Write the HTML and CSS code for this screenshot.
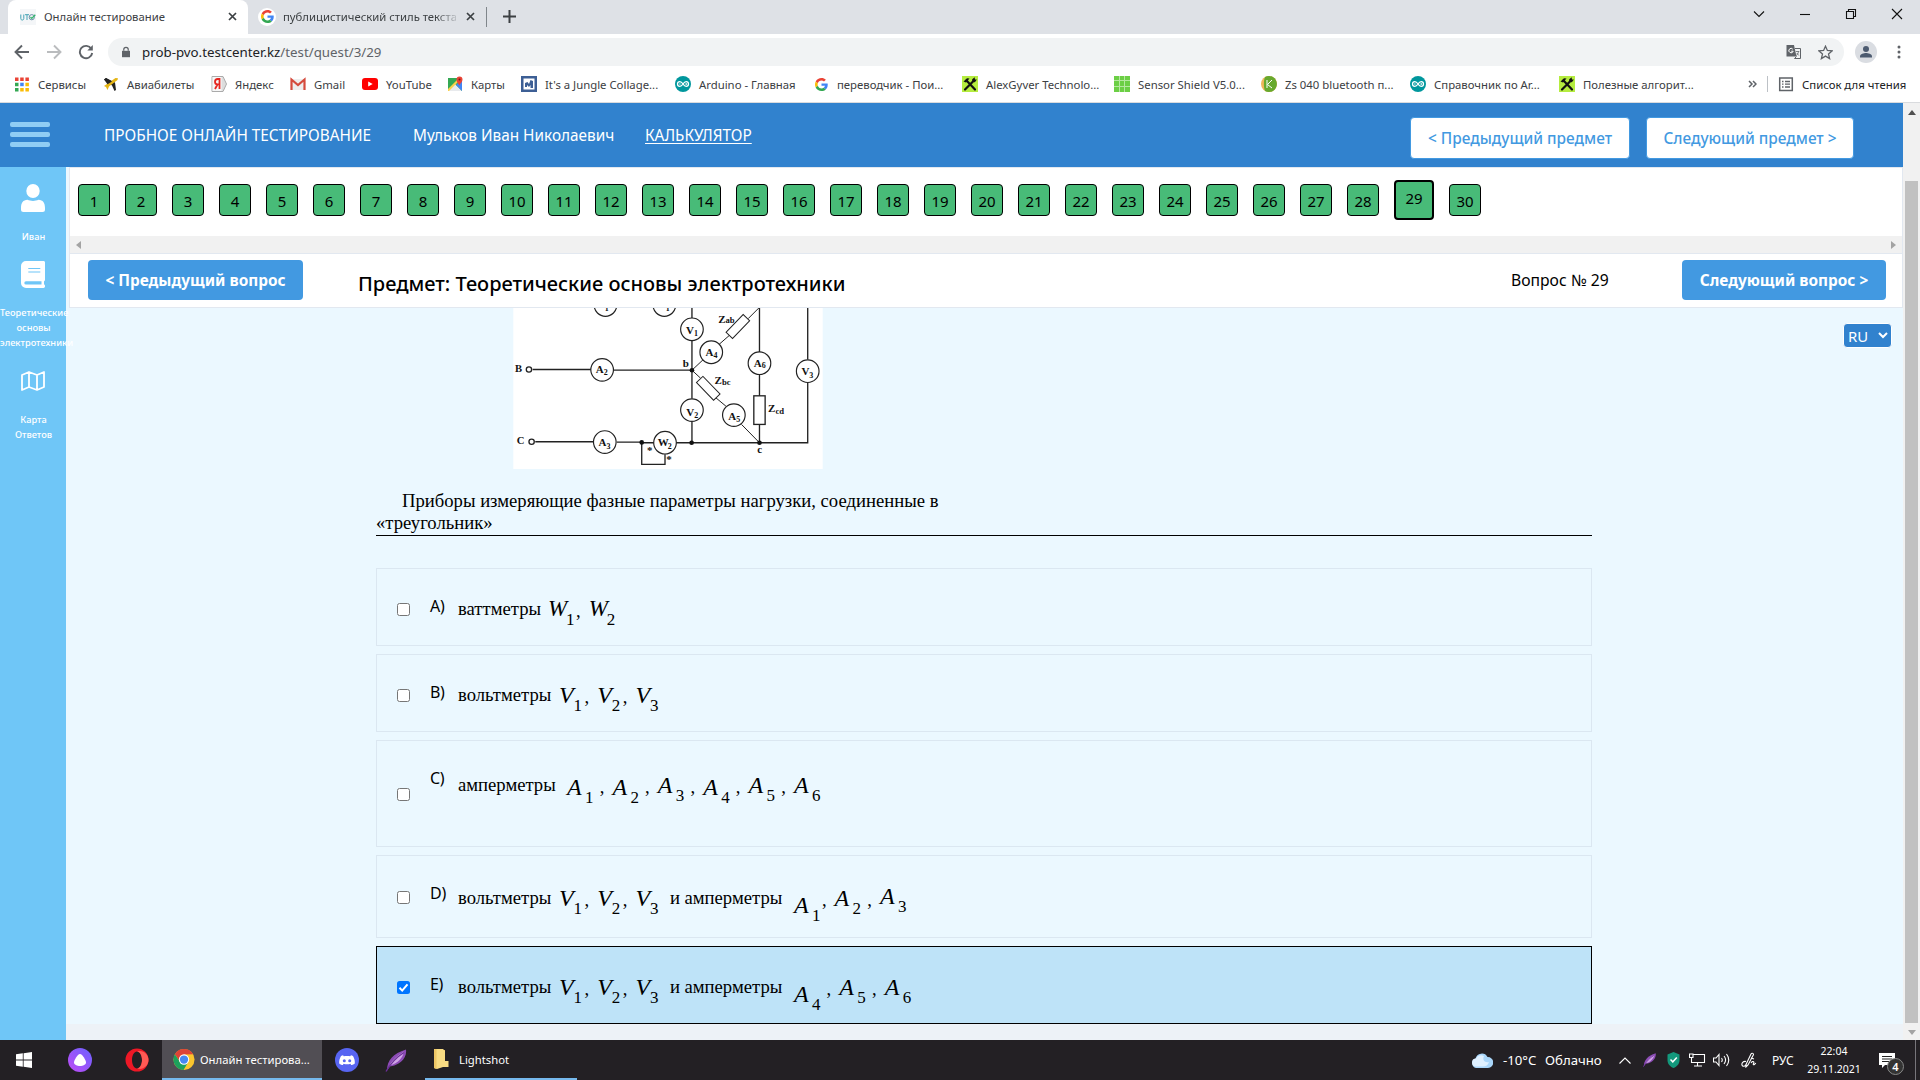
FILE: index.html
```html
<!DOCTYPE html>
<html lang="ru">
<head>
<meta charset="utf-8">
<title>Онлайн тестирование</title>
<link rel="stylesheet" href="styles.css">
</head>
<body>
<svg width="0" height="0" class="defs" aria-hidden="true">
  <defs>
    <symbol id="g" viewBox="0 0 48 48"><path fill="#ea4335" d="M24 9.5c3.5 0 6.700 1.200 9.200 3.600l6.900-6.900C35.900 2.400 30.500 0 24 0 14.600 0 6.500 5.400 2.600 13.200l8 6.200C12.400 13.700 17.700 9.500 24 9.500z"/><path fill="#4285f4" d="M47 24.600c0-1.600-.2-3.100-.4-4.600H24v9h12.900c-.6 3-2.300 5.500-4.800 7.200l7.700 6C44.400 38 47 31.800 47 24.600z"/><path fill="#fbbc05" d="M10.500 28.600c-.5-1.500-.8-3-.8-4.600s.3-3.100.8-4.600l-8-6.200C.9 16.500 0 20.100 0 24s.9 7.500 2.600 10.800z"/><path fill="#34a853" d="M24 48c6.500 0 11.900-2.100 15.900-5.800l-7.700-6c-2.200 1.400-4.900 2.300-8.200 2.300-6.300 0-11.600-4.200-13.500-9.900l-8 6.200C6.500 42.600 14.600 48 24 48z"/></symbol>
    <symbol id="arduino" viewBox="0 0 16 16"><circle cx="8" cy="8" r="8" fill="#00979d"/><path d="M8 8C6.800 6.200 5.900 5.700 4.800 5.700a2.300 2.300 0 0 0 0 4.600C5.900 10.300 6.800 9.800 8 8s2.100-2.300 3.200-2.300a2.300 2.300 0 0 1 0 4.600C10.100 10.300 9.200 9.800 8 8z" fill="none" stroke="#fff" stroke-width="1.300"/><path d="M4 8h1.700M10.400 8h1.700M11.250 7.200v1.700" stroke="#fff" stroke-width=".8"/></symbol>
    <symbol id="gyver" viewBox="0 0 16 16"><path fill="#b5ec3f" d="M0 0h16v16H0z"/><path d="M3 13.500 12 4.500M4.500 4.500l8.500 9" stroke="#111" stroke-width="2.200" stroke-linecap="round"/><path d="M1.500 5.500 5 2.200l2.500.3L4 6.500z" fill="#111"/><path d="M10.200 5.800V3.200l2.500-2 .2 2.200 2 .2-2 2.600z" fill="#111"/></symbol>
    <symbol id="feather" viewBox="0 0 24 24"><path d="M3 22C3 12 9 5 22 1c1 6-3 15-16 17z" fill="#8c4bb5"/><path d="M4 20C7 13 12 8 20 3c-1 6-6 12-14 14z" fill="#cfa5e6"/><path d="M2 23C7 14 12 9 20 4" stroke="#6a2e96" stroke-width="1.300" fill="none"/></symbol>
  </defs>
</svg>

<header class="tabs">
  <div class="tab tab-active">
    <svg class="fav" viewBox="0 0 16 16"><path fill="#f4f6f8" d="M0 0h16v16H0z"/><path d="M.8 5.500v4c0 1 .6 1.500 1.500 1.500s1.500-.5 1.500-1.500v-4M5 5.700h4M7 5.700V11" stroke="#44a3b5" fill="none"/><circle cx="11.800" cy="8.200" r="2.600" fill="none" stroke="#6a8fa8"/><path d="m10.500 8 1.300 1.400 3.500-3.600" stroke="#32b56c" stroke-width="1.300" fill="none"/></svg>
    <span class="tab-title">Онлайн тестирование</span>
    <svg class="cross" viewBox="0 0 9 9"><path d="m1 1 7 7M8 1 1 8"/></svg>
  </div>
  <div class="tab">
    <span class="g-badge"><svg viewBox="0 0 48 48"><use href="#g"/></svg></span>
    <span class="tab-title tab-fade">публицистический стиль текста</span>
    <svg class="cross" viewBox="0 0 9 9"><path d="m1 1 7 7M8 1 1 8"/></svg>
  </div>
  <span class="tab-sep"></span>
  <svg class="plus" viewBox="0 0 13 13"><path d="M6.500 0v13M0 6.500h13"/></svg>
  <div class="win">
    <svg viewBox="0 0 12 12"><path d="m1 3.500 5 5 5-5"/></svg>
    <svg viewBox="0 0 12 12"><path d="M1 6.500h10"/></svg>
    <svg viewBox="0 0 12 12"><path d="M1.500 3.500h7v7h-7zM3.500 3.500v-2h7v7h-2"/></svg>
    <svg viewBox="0 0 12 12"><path d="m1 1 10 10M11 1 1 11"/></svg>
  </div>
</header>

<div class="toolbar">
  <svg class="nav" viewBox="0 0 16 16"><path d="M15 8H2M8 1.500 1.500 8 8 14.500"/></svg>
  <svg class="nav nav-off" viewBox="0 0 16 16"><path d="M1 8h13M8 1.500 14.500 8 8 14.500"/></svg>
  <svg class="nav" viewBox="0 0 16 16"><path d="M13.300 4.700A6.200 6.200 0 1 0 14.200 9"/><path d="M14.800 1v5.500H9.300z" fill="#5f6368" stroke="none"/></svg>
  <div class="omnibox">
    <svg class="lock" viewBox="0 0 10 13"><path d="M0 5h10v8H0z" fill="#5f6368"/><path d="M2.200 5V3.500a2.800 2.800 0 0 1 5.600 0V5" fill="none" stroke="#5f6368" stroke-width="1.500"/></svg>
    <span class="url">prob-pvo.testcenter.kz<i>/test/quest/3/29</i></span>
    <svg class="trans" viewBox="0 0 15 14"><path d="M.5 0H8l2.500 11.500H.5z" fill="#5f6368"/><path d="M9 3.500h5.500v10h-6l2-2" fill="none" stroke="#5f6368"/><path d="M6.800 4.200a2.200 2.200 0 1 0 .4 2H5.200" fill="none" stroke="#fff"/><path d="M9.800 6.500h3.500M12.500 6.500c-.3 2-1 3-2.200 4M10.800 8l2 2.500" fill="none" stroke="#5f6368" stroke-width=".8"/></svg>
    <svg class="star" viewBox="0 0 15 15"><path d="m7.500 1.200 1.900 4.300 4.600.4-3.500 3.100 1.100 4.600-4.100-2.500-4.100 2.500L4.500 9 1 5.900l4.600-.4z" fill="none" stroke="#5f6368" stroke-width="1.300"/></svg>
  </div>
  <svg class="avatar" viewBox="0 0 22 22"><circle cx="11" cy="11" r="11" fill="#dadde2"/><circle cx="11" cy="8" r="3" fill="#4d5b70"/><path d="M5 16.500v-1.300c0-2.200 4-3.200 6-3.200s6 1 6 3.200v1.300z" fill="#4d5b70"/></svg>
  <svg class="kebab" viewBox="0 0 4 14"><circle cx="2" cy="2" r="1.500"/><circle cx="2" cy="7" r="1.500"/><circle cx="2" cy="12" r="1.500"/></svg>
</div>

<nav class="bookmarks">
  <a><svg viewBox="0 0 16 16"><path fill="#ea4335" d="M1 1.500h3.500V5H1zM6.200 1.500h3.500V5H6.200zM11.400 1.500h3.500V5h-3.500z"/><path fill="#34a853" d="M1 6.700h3.500v3.500H1zM1 11.900h3.500v3.500H1z"/><path fill="#4285f4" d="M6.200 6.700h3.500v3.500H6.200z"/><path fill="#fbbc05" d="M11.400 6.700h3.500v3.500h-3.500zM6.200 11.900h3.500v3.500H6.200zM11.400 11.900h3.500v3.500h-3.500z"/></svg>Сервисы</a>
  <a><svg viewBox="0 0 16 16"><path d="M1 3.500 3 2l9 4.500 1 7.500-1.500 1L9 9.500z" fill="#222"/><path d="M1 10 12.500 2l2.500.2-.5 1.800L6 10.500 4.500 14 3 11z" fill="#e5b515"/><path d="m1 3.500 3.500 4.700L9 5.500 3 2z" fill="#222"/></svg>Авиабилеты</a>
  <a><svg viewBox="0 0 16 16"><path d="M1 .5h11L15.500 8 12 15.500H1z" fill="#ddd" stroke="#aaa"/><path d="M1.500 1h9v14h-9z" fill="#f7f7f7"/><path d="M8.500 13V3H6.800C5 3 4 4.200 4 5.700s.8 2.600 2.500 2.600h2M6.500 8.500 4 13" fill="none" stroke="#e52620" stroke-width="1.800"/></svg>Яндекс</a>
  <a><svg viewBox="0 0 16 16"><path d="M1 3h14v11H1z" fill="#eee"/><path d="M1.500 14V3.500L8 9l6.500-5.500V14" fill="none" stroke="#d54b3d" stroke-width="2.200"/></svg>Gmail</a>
  <a><svg viewBox="0 0 16 16"><rect y="2" width="16" height="12" rx="3" fill="#f00"/><path d="m6.200 5.500 4.500 2.500-4.500 2.500z" fill="#fff"/></svg>YouTube</a>
  <a><svg viewBox="0 0 16 16"><path d="M1 2h14v13H1z" fill="#34a853"/><path d="m1 15 7-7 7 7z" fill="#e8eaed"/><path d="m9 9 6-6v12z" fill="#4285f4"/><path d="m1 13 11-11h3L2 15H1z" fill="#fbd14b"/><path d="M12.300 9.500C11 7 9.500 6 9.500 3.500a3 3 0 0 1 6 0c0 2.500-2 3.500-3.200 6z" fill="#ea4335"/><circle cx="12.500" cy="3.500" r="1" fill="#7b1a12"/></svg>Карты</a>
  <a><svg viewBox="0 0 16 16"><path d="M0 0h16v16H0z" fill="#3d5f95"/><path d="M2.500 2.500h11v11h-11z" fill="#fff"/><path d="M4 11V7l2.500-1 1.500 2 1.500-4L12 5v7H9.500V9L8 11 6 9v2z" fill="#3d5f95"/></svg>It's a Jungle Collage...</a>
  <a><svg viewBox="0 0 16 16"><use href="#arduino"/></svg>Arduino - Главная</a>
  <a><svg class="g-small" viewBox="0 0 48 48"><use href="#g"/></svg>переводчик - Пои...</a>
  <a><svg viewBox="0 0 16 16"><use href="#gyver"/></svg>AlexGyver Technolo...</a>
  <a><svg viewBox="0 0 16 16"><path d="M0 0h16v16H0z" fill="#6ccf45"/><path d="M5.500 0v16M10.500 0v16M0 4.500h16M0 10.500h16" stroke="#b5e8a0"/></svg>Sensor Shield V5.0...</a>
  <a><svg viewBox="0 0 16 16"><circle cx="8" cy="8" r="8" fill="#efb65c"/><path d="M4 1a8 8 0 1 1 0 14C2.500 11 2.500 5 4 1z" fill="#67a92e"/><path d="M6 4v8M11 4 6.500 8.500 11 12" stroke="#fff" fill="none"/></svg>Zs 040 bluetooth п...</a>
  <a><svg viewBox="0 0 16 16"><use href="#arduino"/></svg>Справочник по Ar...</a>
  <a><svg viewBox="0 0 16 16"><use href="#gyver"/></svg>Полезные алгорит...</a>
  <svg class="more" viewBox="0 0 9 8"><path d="m1 1 3 3-3 3M5 1l3 3-3 3" fill="none" stroke="#5f6368" stroke-width="1.500"/></svg>
  <a class="reading"><svg viewBox="0 0 16 16"><path d="M1.700 2h12.600v12.500H1.700z" fill="none" stroke="#5f6368" stroke-width="1.500"/><path d="M4 5.500h1.500M4 8.200h1.500M4 11h1.500M7 5.500h5M7 8.200h5M7 11h5" stroke="#5f6368" stroke-width="1.300"/></svg>Список для чтения</a>
</nav>

<div class="viewport">
  <div class="page">
    <div class="topbar">
      <span class="burger"><i></i><i></i><i></i></span>
      <span>ПРОБНОЕ ОНЛАЙН ТЕСТИРОВАНИЕ</span>
      <span class="name">Мульков Иван Николаевич</span>
      <a class="calc">КАЛЬКУЛЯТОР</a>
      <button class="subj prev-s">&lt; Предыдущий предмет</button>
      <button class="subj next-s">Следующий предмет &gt;</button>
    </div>
    <div class="body">
      <aside class="side">
        <svg class="s1" viewBox="0 0 24 28"><ellipse cx="12" cy="7" rx="6.700" ry="7"/><path d="M0 24c0-5 2-8 6.500-8.200 3 1.500 8 1.500 11 0C22 16 24 19 24 24v1.500a2.500 2.500 0 0 1-2.500 2.500h-19A2.500 2.500 0 0 1 0 25.500z"/></svg>
        <span>Иван</span>
        <svg class="s2" viewBox="0 0 24 27"><path d="M5 0h17.500c.8 0 1.500.6 1.500 1.400v17.500c0 .6-.4 1-.8 1.200-.3 1-.3 2.600 0 3.500.5.200.8.600.8 1.200v.8c0 .8-.7 1.400-1.500 1.400H5a5 5 0 0 1-5-5V5a5 5 0 0 1 5-5z"/><path d="M7.300 7.500h12M7.300 11h12" stroke="#6fc6f7" stroke-width="1.200"/><path d="M5 20.200h15.500v3.400H5a1.700 1.700 0 0 1 0-3.400z" fill="#6fc6f7"/></svg>
        <span>Теоретические<br>основы<br>электротехники</span>
        <svg class="s3" viewBox="0 0 24 20"><path d="M1 4 8 1l8 3 7-3v15l-7 3-8-3-7 3zM8 1v15M16 4v15" fill="none" stroke="#fff" stroke-width="1.800" stroke-linejoin="round"/></svg>
        <span>Карта<br>Ответов</span>
      </aside>
      <main class="main">
        <div class="numbers">
          <b>1</b><b>2</b><b>3</b><b>4</b><b>5</b><b>6</b><b>7</b><b>8</b><b>9</b><b>10</b><b>11</b><b>12</b><b>13</b><b>14</b><b>15</b><b>16</b><b>17</b><b>18</b><b>19</b><b>20</b><b>21</b><b>22</b><b>23</b><b>24</b><b>25</b><b>26</b><b>27</b><b>28</b><b class="current">29</b><b>30</b>
        </div>
        <div class="hscroll"><svg viewBox="0 0 5 8"><path d="M5 0v8L0 4z"/></svg><svg viewBox="0 0 5 8"><path d="M0 0v8l5-4z"/></svg></div>
        <div class="qbar">
          <button class="q-prev">&lt; Предыдущий вопрос</button>
          <h1>Предмет: Теоретические основы электротехники</h1>
          <span class="qnum">Вопрос № 29</span>
          <button class="q-next">Следующий вопрос &gt;</button>
        </div>
        <div class="content">
          <div class="lang">RU<svg viewBox="0 0 10 7"><path d="m1 1 4 4 4-4" fill="none" stroke="#fff" stroke-width="2"/></svg></div>
          <div class="question">
            <svg class="circuit" viewBox="39 23 930 484">
              <path fill="#fff" d="M39 21h930v486H39z"/>
              <g stroke="#222" stroke-width="4" fill="none">
                <path d="M97 208h176M341 210h235M105 425h175M350 426h75M425 428h499V248M924 178V21M576 21v32M576 122v174M576 365v63M779 21v135M779 223v205M425 428v65h70v-30"/>
                <g stroke-width="3"><path d="m779 21-34 34M690 104l-32 28M609 179l-33 31 26 24M648 293l30 25M725 373l54 55"/></g>
                <g fill="#fff">
                  <circle cx="86" cy="208" r="8"/><circle cx="94" cy="425" r="8"/>
                  <g stroke-width="3.500"><circle cx="316" cy="14" r="34"/><circle cx="493" cy="14" r="34"/><circle cx="576" cy="87" r="34"/><circle cx="634" cy="156" r="34"/><circle cx="306" cy="209" r="34"/><circle cx="576" cy="330" r="34"/><circle cx="702" cy="345" r="34"/><circle cx="779" cy="189" r="34"/><circle cx="924" cy="213" r="34"/><circle cx="314" cy="426" r="34"/><circle cx="495" cy="428" r="34"/></g>
                  <rect x="762" y="287" width="34" height="86"/>
                  <g stroke-width="3"><rect x="677" y="65" width="74" height="27" transform="rotate(-46 714 78.500)"/><rect x="588" y="251" width="74" height="27" transform="rotate(46 625 264.500)"/></g>
                </g>
              </g>
              <g fill="#111"><circle cx="576" cy="210" r="7"/><circle cx="425" cy="427" r="7"/><circle cx="575" cy="428" r="7"/><circle cx="779" cy="428" r="7"/></g>
              <g class="ct">
                <text x="44" y="216" class="pl">B</text><text x="49" y="433" class="pl">C</text>
                <text x="548" y="201">b</text><text x="772" y="460">c</text>
                <text x="290" y="24">A<tspan dy="7" class="sb">1</tspan></text><text x="464" y="24">W<tspan dy="7" class="sb">1</tspan></text>
                <text x="558" y="100">V<tspan dy="7" class="sb">1</tspan></text><text x="617" y="167">A<tspan dy="6" class="sb">4</tspan></text>
                <text x="287" y="218">A<tspan dy="6" class="sb">2</tspan></text><text x="559" y="347">V<tspan dy="8" class="sb">2</tspan></text>
                <text x="685" y="359">A<tspan dy="6" class="sb">5</tspan></text><text x="762" y="199">A<tspan dy="5" class="sb">6</tspan></text>
                <text x="905" y="225">V<tspan dy="7" class="sb">3</tspan></text><text x="295" y="437">A<tspan dy="9" class="sb">3</tspan></text>
                <text x="473" y="439">W<tspan dy="7" class="sb" dx="-3">2</tspan></text>
                <text x="655" y="67">Z<tspan class="sb zs">ab</tspan></text><text x="644" y="250">Z<tspan dy="4" class="sb zs">bc</tspan></text><text x="805" y="336">Z<tspan dy="6" class="sb zs">cd</tspan></text>
                <text x="441" y="462">*</text><text x="499" y="489">*</text>
              </g>
            </svg>
            <p class="qtext">Приборы измеряющие фазные параметры нагрузки, соединенные в<br>«треугольник»</p>
            <div class="opt oa"><i class="cb"></i><span class="lt">A)</span><span class="tx w82">ваттметры</span><span class="sym sw"><em>W</em><sub>1</sub></span><u>,</u><span class="sym sw"><em>W</em><sub>2</sub></span></div>
            <div class="opt ob"><i class="cb"></i><span class="lt">B)</span><span class="tx w92">вольтметры</span><span class="sym"><em>V</em><sub>1</sub></span><u>,</u><span class="sym"><em>V</em><sub>2</sub></span><u>,</u><span class="sym"><em>V</em><sub>3</sub></span></div>
            <div class="opt oc"><i class="cb"></i><span class="lt">C)</span><span class="tx w98">амперметры</span><span class="sym sa"><em>A</em><sub>1</sub></span><u>,</u><span class="sym sa"><em>A</em><sub>2</sub></span><u>,</u><span class="sym sa up"><em>A</em><sub>3</sub></span><u>,</u><span class="sym sa"><em>A</em><sub>4</sub></span><u>,</u><span class="sym sa up"><em>A</em><sub>5</sub></span><u>,</u><span class="sym sa up"><em>A</em><sub>6</sub></span></div>
            <div class="opt od"><i class="cb"></i><span class="lt">D)</span><span class="tx w92">вольтметры</span><span class="sym"><em>V</em><sub>1</sub></span><u>,</u><span class="sym"><em>V</em><sub>2</sub></span><u>,</u><span class="sym"><em>V</em><sub>3</sub></span><span class="tx w113">и амперметры</span><span class="sym s1a low"><em>A</em><sub>1</sub></span><u>,</u><span class="sym sa"><em>A</em><sub>2</sub></span><u>,</u><span class="sym sa up"><em>A</em><sub>3</sub></span></div>
            <div class="opt oe"><i class="cb on"><svg viewBox="0 0 13 13"><path d="m2.500 6.800 2.700 2.800 5.300-6.300" fill="none" stroke="#fff" stroke-width="2"/></svg></i><span class="lt">E)</span><span class="tx w92">вольтметры</span><span class="sym"><em>V</em><sub>1</sub></span><u>,</u><span class="sym"><em>V</em><sub>2</sub></span><u>,</u><span class="sym"><em>V</em><sub>3</sub></span><span class="tx w113">и амперметры</span><span class="sym sa low"><em>A</em><sub>4</sub></span><u>,</u><span class="sym sa"><em>A</em><sub>5</sub></span><u>,</u><span class="sym sa"><em>A</em><sub>6</sub></span></div>
          </div>
        </div>
        <div class="foot"></div>
      </main>
    </div>
  </div>
  <div class="vscroll"><svg viewBox="0 0 8 5"><path d="M0 5h8L4 0z" fill="#505050"/></svg><span></span><svg viewBox="0 0 8 5"><path d="M0 0h8L4 5z" fill="#a3a3a3"/></svg></div>
</div>

<footer class="taskbar">
  <svg class="t-win" viewBox="0 0 16 16"><path d="m0 2.300 6.800-1v6.300H0zM7.600 1.200 16 0v7.600H7.600zM0 8.400h6.800v6.300L0 13.700zM7.600 8.400H16V16l-8.400-1.200z" fill="#fff"/></svg>
  <svg class="t-alice" viewBox="0 0 24 24"><defs><linearGradient id="al" x1="0" y1="1" x2="1" y2="0"><stop stop-color="#c04bf5"/><stop offset="1" stop-color="#6a62ff"/></linearGradient></defs><circle cx="12" cy="12" r="12" fill="url(#al)"/><path d="M12 6c2.500 0 6 6.500 6 8.500S15 18 12 18s-6-1.500-6-3.500S9.500 6 12 6z" fill="#fff"/></svg>
  <svg class="t-opera" viewBox="0 0 24 24"><path fill-rule="evenodd" d="M12 .5a11.500 11.500 0 1 0 0 23 11.500 11.500 0 0 0 0-23zm0 3c2.800 0 5 3.800 5 8.500s-2.200 8.500-5 8.500S7 16.700 7 12s2.200-8.500 5-8.500z" fill="#ee1826"/><path d="M12 3.500c2.800 0 5 3.800 5 8.500s-2.200 8.500-5 8.500c6 2 11.500-3 11.500-8.500S18 1.500 12 3.500z" fill="#ff5a54"/></svg>
  <div class="task active"><svg viewBox="0 0 24 24"><circle cx="12" cy="12" r="11.500" fill="#fbc52d"/><path d="M2 6.200A11.500 11.500 0 0 1 22 6.300L12 6.500 7.500 14.500z" fill="#dd4437"/><path d="M2 6.200A11.500 11.500 0 0 0 11.500 23.500L16.500 15 7.500 14.500z" fill="#1da15c"/><circle cx="12" cy="12" r="5.600" fill="#fff"/><circle cx="12" cy="12" r="4.500" fill="#4688f1"/></svg>Онлайн тестирова...</div>
  <svg class="t-disc" viewBox="0 0 24 24"><circle cx="12" cy="12" r="12" fill="#5865f2"/><path d="M8 7.200c-1.200.3-2 .7-2 .7C4.500 10.500 4 13 4.200 15.500c1.200 1 2.400 1.400 3.600 1.600l.8-1.300c2 .7 4.800.7 6.800 0l.8 1.300c1.200-.2 2.400-.6 3.600-1.600.2-2.500-.3-5-1.800-7.600 0 0-.8-.4-2-.7l-.8 1c-2-.4-4.400-.4-6.400 0z" fill="#fff"/><circle cx="9.300" cy="12.700" r="1.500" fill="#5865f2"/><circle cx="14.700" cy="12.700" r="1.500" fill="#5865f2"/></svg>
  <svg class="t-feather" viewBox="0 0 24 24"><use href="#feather"/></svg>
  <div class="task folder"><svg viewBox="0 0 15 20"><path d="M4 1h7v17H4z" fill="#e0b554"/><path d="M0 0h9l2 2v10h3.500v6H9l-6 2-3-1z" fill="#f9dc83"/><path d="M0 0h2.500v20L0 19z" fill="#eec665"/></svg>Lightshot</div>
  <div class="tray">
    <svg class="cloud" viewBox="0 0 22 15"><path d="M5 15a5 5 0 0 1-.5-9.500A6.500 6.500 0 0 1 16.500 4 5.500 5.500 0 0 1 17 15z" fill="#a9d6fa"/><path d="M5 13.500a4 4 0 0 1 0-8A6 6 0 0 1 13 3c-2 4 1 7 5 6-1 3-3 4.500-6 4.500z" fill="#dff0ff"/></svg>
    <span class="temp">-10°C</span><span class="sky">Облачно</span>
    <svg class="up-i" viewBox="0 0 12 7"><path d="m.5 6.500 5.500-5.500 5.500 5.500"/></svg>
    <svg class="f-i" viewBox="0 0 24 24"><use href="#feather"/></svg>
    <svg class="sh-i" viewBox="0 0 13 16"><path d="m6.500 0 6 2.500V8c0 4-2.500 6.500-6 8-3.500-1.500-6-4-6-8V2.500z" fill="#13987c"/><path d="m3.500 7.500 2.300 2.300 4-4.300" fill="none" stroke="#fff" stroke-width="1.500"/></svg>
    <svg class="n-i" viewBox="0 0 17 14"><path d="M4.500 1.500h11v8h-13V6M8.500 9.500v3M5 13h8M.5 1h3.500v3.500H.5zM2.500 4.500V7"/></svg>
    <svg class="v-i" viewBox="0 0 17 14"><path d="M.5 5h2.500l3-3.500v11L3 9H.500zM8.500 5c1 1.300 1 2.700 0 4M11 3c2 2.500 2 5.500 0 8M13.500 1c3 4 3 8 0 12"/></svg>
    <svg class="p-i" viewBox="0 0 16 16"><path d="M5 9.500C2 9 .5 11 1 13s3.500 1.500 4-.5L10 2c1-1.500 3-.5 2.300 1L7 13l-2 2 .2-3M10 11c1-1.500 2.300-2 2.800-1s-1 2-.5 2.500 1.500 0 2.500-1.500M10 6l3 1"/></svg>
    <span class="rus">РУС</span>
    <span class="clock">22:04<br>29.11.2021</span>
    <span class="notif"><svg viewBox="0 0 16 15"><path d="M0 0h16v12H6l-3 3v-3H0z" fill="#fff"/><path d="M3 3.500h10M3 6h10M3 8.500h7" stroke="#222"/></svg><i>4</i></span>
    <span class="peek"></span>
  </div>
</footer>
</body>
</html>
```
FILE: styles.css
```css
* { box-sizing: border-box; }
body { margin: 0; width: 1920px; height: 1080px; overflow: hidden; font-family: "Noto Sans", "Open Sans", sans-serif; color: #000; white-space: nowrap; display: flex; flex-direction: column; }
svg { display: block; flex: none; }
.defs { position: absolute; }
i, em, u, b { font-style: normal; font-weight: 400; text-decoration: none; }
button { font: inherit; padding: 0; cursor: pointer; }

/* Browser chrome */
.tabs { height: 34px; flex: none; background: #dee1e6; display: flex; align-items: flex-start; font-size: 11.3px; color: #3c4043; }
.tab { height: 34px; display: flex; align-items: center; padding: 0 0 1px 12px; }
.tab-active { margin-left: 8px; width: 240px; background: #fff; border-radius: 8px 8px 0 0; }
.fav { width: 16px; height: 16px; margin-right: 8px; }
.tab-title { width: 184px; }
.tab-active + .tab { padding-left: 10px; width: 238px; }
.g-badge { width: 18px; height: 18px; border-radius: 50%; background: #fff; display: flex; align-items: center; justify-content: center; margin-right: 7px; }
.g-badge svg { width: 13px; height: 13px; }
.tab-fade { width: 173px; margin-right: 10px; overflow: hidden; -webkit-mask-image: linear-gradient(90deg, #000 88%, rgba(0,0,0,.2)); }
.cross { width: 9px; height: 9px; stroke: #3c4043; stroke-width: 1.7; }
.tab-sep { width: 1px; height: 20px; margin-top: 7px; background: #80868b; }
.plus { width: 13px; height: 13px; margin: 10px 0 0 16px; stroke: #3c4043; stroke-width: 2; }
.win { margin: 8px 17px 0 auto; display: flex; gap: 34px; }
.win svg { width: 12px; height: 12px; fill: none; stroke: #111; stroke-width: 1.1; }

.toolbar { height: 34px; flex: none; margin-top: 1px; display: flex; align-items: center; padding-left: 14px; background: #fff; }
.nav { width: 16px; height: 16px; margin-right: 16px; fill: none; stroke: #5f6368; stroke-width: 1.900; }
.nav-off { stroke: #babcbe; }
.omnibox { width: 1736px; height: 28px; margin-left: -2px; border-radius: 14px; background: #f1f3f4; display: flex; align-items: center; padding-left: 14px; }
.lock { width: 8px; height: 12px; margin-right: 12px; }
.url { font-size: 13.3px; color: #202124; width: 1644px; }
.url i { color: #5f6368; }
.trans { width: 15px; height: 14px; margin-right: 17px; }
.star { width: 15px; height: 15px; }
.avatar { width: 22px; height: 22px; margin: 0 20px 0 11px; }
.kebab { width: 4px; height: 14px; fill: #5f6368; }

.bookmarks { height: 34px; flex: none; border-bottom: 1px solid #d9dbde; display: grid; grid-template-columns: 89px 108px 79px 72px 85px 74px 154px 138px 149px 152px 147px 149px 149px 189px 19px 1fr; padding: 0 0 3px 14px; align-items: center; font-size: 11.35px; color: #3c4043; background: #fff; }
.bookmarks a { display: flex; align-items: center; }
.bookmarks a svg { width: 16px; height: 16px; margin-right: 8px; }
.bookmarks a .g-small { width: 13px; height: 13px; margin: 0 9px 0 2px; }
.more { width: 9px; height: 8px; }
.reading { height: 16px; border-left: 1px solid #bdc1c6; padding-left: 10px; color: #202124; }

/* Page */
.viewport { height: 937px; flex: none; display: flex; }
.page { width: 1903px; }
.topbar { height: 64px; background: #3182ce; color: #fff; display: grid; grid-template-columns: 104px 309px 232px 1fr 220px 16px 208px 49px; align-items: center; font-size: 15.350px; padding-top: 1px; }
.topbar span, .calc { position: relative; top: -1px; }
.burger { padding-left: 10px; display: grid; gap: 5px; }
.burger i { width: 40px; height: 5px; border-radius: 2px; background: #90cdf4; }
.calc { text-decoration: underline; text-underline-offset: 2px; }
.subj { height: 42px; border: 1px solid #4299e1; border-radius: 4px; background: #fff; color: #4299e1; font-weight: 500; font-size: 15.4px; margin-top: 5px; padding-top: 1px; }
.prev-s { grid-column: 5; }
.next-s { grid-column: 7; }

.body { display: flex; height: 873px; background: #ebf8ff; }
.side { width: 66px; margin-right: 3px; background: #6fc6f7; display: flex; flex-direction: column; align-items: center; color: #fff; font-size: 9.250px; line-height: 15px; font-weight: 500; text-align: center; position: relative; z-index: 1; }
.side svg { fill: #fff; }
.side span { width: 72px; align-self: flex-start; padding-right: 5px; }
.s1 { width: 24px; height: 28px; margin: 17px 0; }
.s2 { width: 24px; height: 27px; margin: 17px 0; }
.s3 { width: 24px; height: 20px; margin: 21px 0; }
.main { width: 1834px; display: flex; flex-direction: column; }
.numbers { height: 69px; flex: none; background: #fff; border: 1px solid #e2e8f0; border-bottom: 0; padding: 12px 0 0 8px; display: flex; gap: 15px; }
.numbers b { width: 32px; height: 32px; margin-top: 4px; border: 1px solid #000; border-radius: 4px; background: #48bb78; text-align: center; font-size: 15px; line-height: 33px; }
.numbers .current { width: 40px; height: 40px; margin-top: 0; border-width: 2px; line-height: 32px; }
.hscroll { height: 17px; flex: none; background: #f1f1f1; display: flex; justify-content: space-between; align-items: center; padding: 0 6px; border: solid #e2e8f0; border-width: 0 1px; }
.hscroll svg { width: 5px; height: 8px; fill: #a3a3a3; }
.qbar { height: 55px; flex: none; background: #fff; border: 1px solid #e2e8f0; display: grid; grid-template-columns: 215px 55px 1153px 171px 204px; padding-left: 18px; align-items: start; padding-top: 6px; }
.qbar button { height: 40px; border: 0; border-radius: 4px; background: #4299e1; color: #fff; font-weight: 700; font-size: 15.4px; padding-top: 1px; }
.q-prev { grid-column: 1; }
.qbar h1 { grid-column: 3; margin: 9px 0 0; font-size: 20px; line-height: 30px; font-weight: 500; }
.qnum { font-size: 15.7px; line-height: 41px; }
.content { position: relative; height: 716px; flex: none; }
.lang { position: absolute; left: 1774px; top: 15px; width: 49px; height: 25px; border: 1px solid #fff; border-radius: 4px; background: #3182ce; color: #fff; font-size: 14.9px; display: flex; align-items: center; padding-left: 4px; gap: 10px; }
.lang svg { width: 10px; height: 7px; }

/* Question and answers */
.question { width: 1216px; margin-left: 307px; font-family: "Liberation Serif", serif; }
.circuit { width: 310px; height: 161px; margin-left: 137px; }
.ct { font: 700 33px "Liberation Serif", serif; fill: #111; }
.pl { font-weight: 700; font-size: 32px; }
.sb { font-size: 24px; }
.zs { font-size: 26px; }
.qtext { margin: 21px 0 0; height: 46px; border-bottom: 1px solid #000; font-size: 18.67px; line-height: 22px; text-indent: 26px; }
.opt { height: 78px; margin-top: 8px; border: 1px solid #dbe7f1; display: flex; align-items: flex-start; font-size: 18.67px; }
.oa { margin-top: 32px; }
.oc { height: 107px; }
.od { height: 83px; }
.opt.oe { border-color: #000; background: #bee3f8; }
.cb { width: 13px; height: 13px; margin: 34px 20px 0 20px; border: 1px solid #767676; border-radius: 2.500px; background: #fff; }
.cb.on { border: 0; background: #0075ff; }
.lt { width: 28px; font: 16px/24px "Noto Sans", sans-serif; letter-spacing: -.3px; margin-top: 25px; }
.tx, .opt u, .sym { line-height: 22px; margin-top: 29px; }
.oc .cb { margin-top: 47px; }
.oc .tx, .oc u { margin-top: 33px; }
.oc .sym { margin-top: 35px; }
.od .cb { margin-top: 35px; }
.od .tx, .od .sym, .od u { margin-top: 31px; }
.w82 { width: 90px; }
.w92 { width: 101px; }
.w98 { width: 109px; }
.w113 { width: 124px; margin-left: 9px; }
.opt u { width: 12.700px; padding-top: 2px; }
.sym { width: 25.500px; font-size: 24px; display: flex; }
.sym em { font-style: italic; width: 14.500px; }
.sym sub { font-size: 17px; vertical-align: baseline; padding-top: 11px; }
.sw { width: 28px; }
.sw em { width: 18px; font-size: 23px; letter-spacing: -2px; }
.sa { width: 32.700px; }
.s1a { width: 28px; }
.sa em, .s1a em { width: 18px; }
.opt .sym.low { padding-top: 7px; }
.od .sym.up { margin-top: 29px; }
.oc .sym.up { margin-top: 33px; }
.foot { height: 16px; background: #edf2f7; margin-left: -3px; }
.vscroll { width: 17px; background: #f1f1f1; display: flex; flex-direction: column; align-items: center; }
.vscroll svg { width: 8px; height: 5px; margin-top: 7px; }
.vscroll span { width: 13px; height: 842px; margin-top: 66px; background: #c1c1c1; }

/* Taskbar */
.taskbar { height: 40px; flex: none; background: #232024; color: #fff; display: flex; align-items: center; font-size: 11.3px; }
.t-win { width: 16px; height: 16px; margin-left: 16px; }
.t-alice { width: 24px; height: 24px; margin-left: 36px; }
.t-opera { width: 24px; height: 24px; margin-left: 33px; }
.task { height: 40px; display: flex; align-items: center; border-bottom: 2px solid #76b9ed; }
.active { width: 160px; margin-left: 13px; background: #514e54; padding-left: 11px; }
.active svg { width: 22px; height: 23px; margin-right: 5px; }
.t-disc { width: 24px; height: 24px; margin-left: 13px; }
.t-feather { width: 24px; height: 25px; margin-left: 25px; }
.folder { width: 152px; margin-left: 17px; padding-left: 9px; }
.folder svg { width: 15px; height: 20px; margin-right: 10px; }
.tray { margin-left: auto; height: 40px; width: 449px; display: flex; align-items: center; }
.tray svg { fill: none; stroke: #fff; stroke-width: 1.100; }
.tray .cloud, .tray .f-i, .tray .sh-i, .tray .notif svg { stroke: none; }
.cloud { width: 22px; height: 15px; }
.temp { font-size: 13.2px; margin-left: 10px; width: 42px; }
.sky { font-size: 13.2px; width: 74px; }
.up-i { width: 12px; height: 7px; }
.f-i { width: 15px; height: 16px; margin-left: 11px; }
.sh-i { width: 13px; height: 16px; margin-left: 10px; }
.n-i { width: 17px; height: 14px; margin-left: 9px; }
.v-i { width: 17px; height: 14px; margin-left: 7px; }
.p-i { width: 16px; height: 16px; margin-left: 11px; }
.rus { margin-left: 15px; width: 29px; font-size: 12px; }
.clock { width: 66px; text-align: center; line-height: 18px; font-size: 10.500px; }
.notif { position: relative; margin-left: 12px; }
.notif svg { width: 16px; height: 15px; }
.notif i { position: absolute; left: 8px; top: 5px; width: 17px; height: 17px; border-radius: 50%; background: #333; border: 1px solid #888; font-size: 11px; font-weight: 600; line-height: 15px; text-align: center; }
.peek { width: 1px; height: 40px; background: #77757a; margin-left: 20px; }
```
